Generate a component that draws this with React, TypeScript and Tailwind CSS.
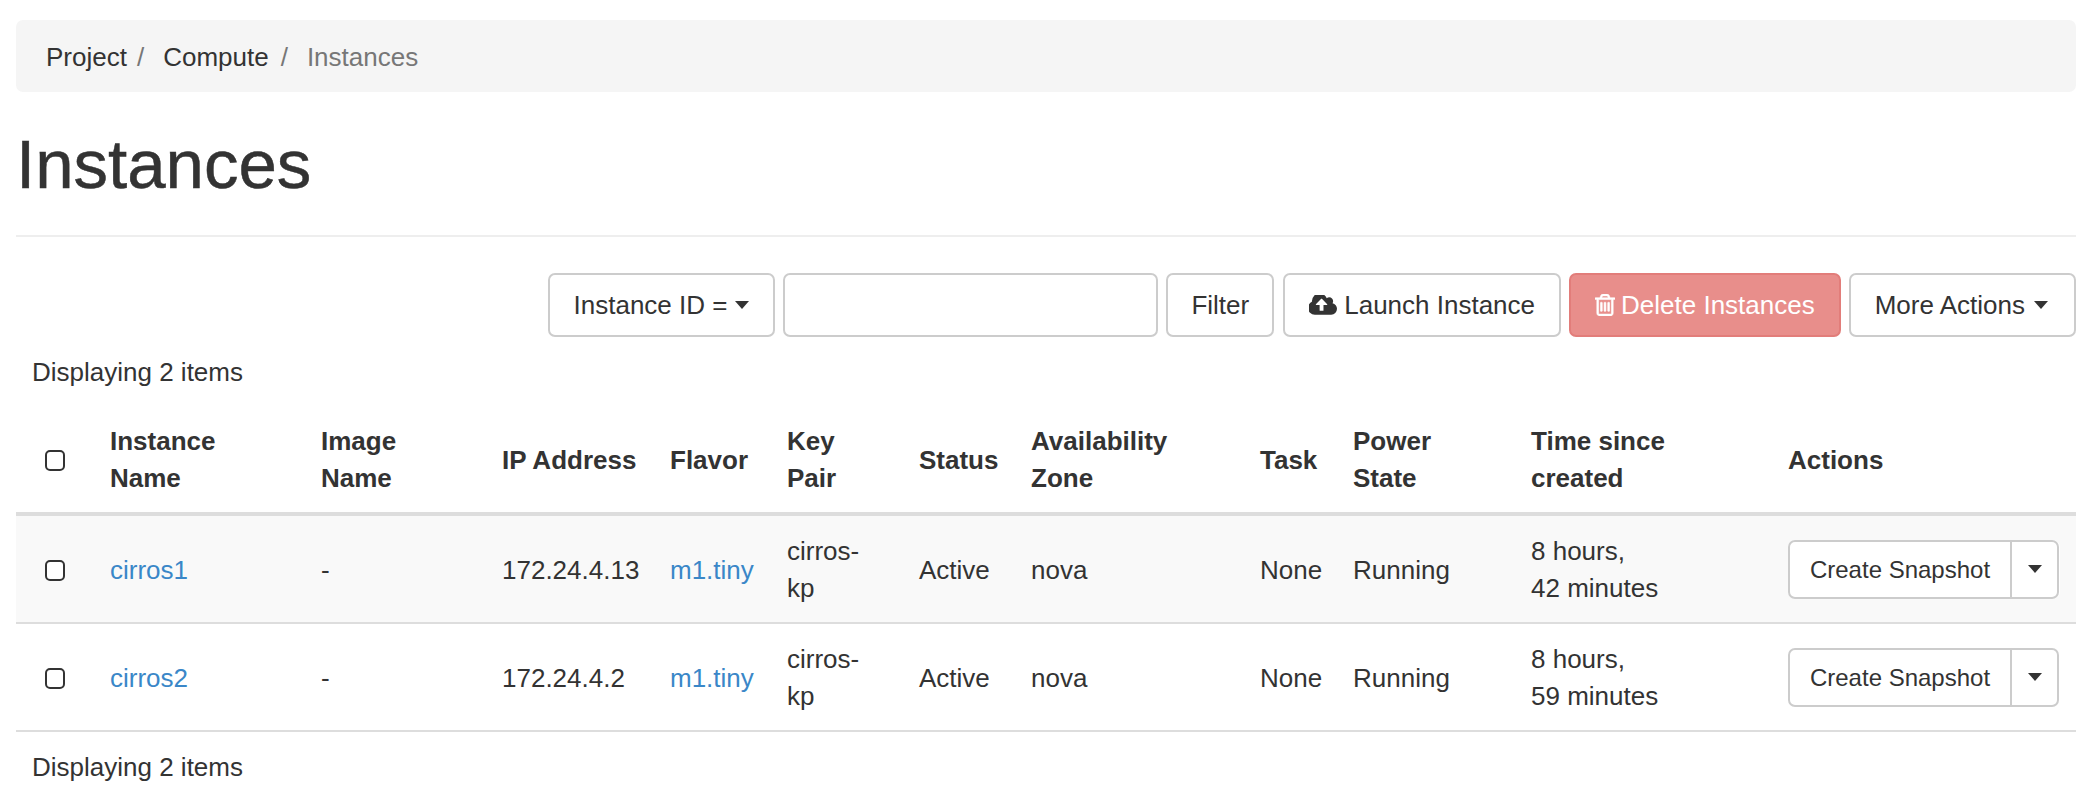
interface Instance {
  name: string;
  ip: string;
  minutes: string;
  striped: boolean;
}

const INSTANCES: Instance[] = [
  { name: 'cirros1', ip: '172.24.4.13', minutes: '42 minutes', striped: true },
  { name: 'cirros2', ip: '172.24.4.2', minutes: '59 minutes', striped: false },
];

function Caret() {
  return <span className="inline-block w-0 h-0 border-x-[7.5px] border-x-transparent border-t-[8px] border-t-[#333]" />;
}

function Checkbox() {
  return <span className="block w-[20px] h-[21px] border-2 border-[#333] rounded-[5px] bg-white" />;
}

function CloudUpload() {
  return (
    <svg viewBox="0 256 1856 1280" className="w-[28px] h-[20px] fill-[#333]">
      <path d="M1216 864q0-14-9-23l-352-352q-9-9-23-9t-23 9l-351 351q-10 12-10 24 0 14 9 23t23 9h224v352q0 13 9.500 22.500t22.500 9.500h192q13 0 22.500-9.500t9.500-22.500v-352h224q13 0 22.500-9.500t9.500-22.500zm640 288q0 159-112.500 271.500t-271.500 112.500h-1088q-185 0-316.500-131.500t-131.500-316.500q0-130 70-240t188-165q-2-30-2-43 0-212 150-362t362-150q156 0 285.500 87t188.500 231q71-62 166-62 106 0 181 75t75 181q0 76-41 138 130 31 213.500 135.500t83.500 238.500z" />
    </svg>
  );
}

function Trash() {
  return (
    <svg viewBox="192 128 1408 1536" className="w-[20px] h-[22px] fill-white stroke-white stroke-[40]">
      <path d="M704 736v576q0 14-9 23t-23 9h-64q-14 0-23-9t-9-23v-576q0-14 9-23t23-9h64q14 0 23 9t9 23zm256 0v576q0 14-9 23t-23 9h-64q-14 0-23-9t-9-23v-576q0-14 9-23t23-9h64q14 0 23 9t9 23zm256 0v576q0 14-9 23t-23 9h-64q-14 0-23-9t-9-23v-576q0-14 9-23t23-9h64q14 0 23 9t9 23zm128 724v-948h-896v948q0 22 7 40.500t14.500 27 10.500 8.500h832q3 0 10.500-8.500t14.500-27 7-40.500zm-672-1076h448l-48-117q-7-9-17-11h-317q-10 2-17 11zm928 32v64q0 14-9 23t-23 9h-96v948q0 83-47 143.500t-113 60.500h-832q-66 0-113-58.500t-47-141.500v-952h-96q-14 0-23-9t-9-23v-64q0-14 9-23t23-9h309l70-167q15-37 54-63t79-26h320q40 0 79 26t54 63l70 167h309q14 0 23 9t9 23z" />
    </svg>
  );
}

const toolbarBtn = 'h-[64px] px-6 flex items-center border-2 border-[#ccc] rounded-[7px] bg-white text-[#333]';
const th = 'pl-4 pr-4 pt-[17px] pb-[15px] text-left align-middle font-bold border-b-4 border-[#ddd]';
const td = 'pl-4 pr-4 pt-[17px] pb-[15px] align-middle border-b-2 border-[#ddd]';

export default function App() {
  return (
    <div className="pl-4 pr-3 pt-5 bg-white text-[#333] text-[26px] leading-[37px] font-['Liberation_Sans',Arial,sans-serif]">
      {/* Breadcrumb */}
      <div className="h-[72px] pl-[30px] pr-[31px] pt-[2px] flex items-center bg-[#f5f5f5] rounded-[7px]">
        <span>Project</span>
        <span className="pl-[10px] pr-[19px] text-[#777]">/</span>
        <span>Compute</span>
        <span className="pl-[12px] pr-[19px] text-[#777]">/</span>
        <span className="text-[#777]">Instances</span>
      </div>

      {/* Page title */}
      <div className="mt-9 pb-[33px] border-b-2 border-[#eee]">
        <h1 className="text-[69px] leading-[74px] font-normal [-webkit-text-stroke:0.5px_#333]">Instances</h1>
      </div>

      {/* Toolbar */}
      <div className="mt-9 flex justify-end gap-[8px]">
        <button className={`${toolbarBtn} gap-[8px]`}>
          Instance ID = <Caret />
        </button>
        <input className="w-[375px] h-[64px] border-2 border-[#ccc] rounded-[7px] bg-white" />
        <button className="h-[64px] px-[23px] flex items-center border-2 border-[#ccc] rounded-[7px] bg-white text-[#333]">Filter</button>
        <button className={`${toolbarBtn} gap-[7px] ml-px`}>
          <CloudUpload />
          Launch Instance
        </button>
        <button className="h-[64px] px-6 flex items-center gap-[6px] border-2 border-[#e27d7a] rounded-[7px] bg-[#e88e8b] text-white">
          <Trash />
          Delete Instances
        </button>
        <button className="h-[64px] pl-6 pr-[26px] flex items-center gap-[9px] border-2 border-[#ccc] rounded-[7px] bg-white text-[#333]">
          More Actions <Caret />
        </button>
      </div>

      {/* Table */}
      <table className="w-full table-fixed border-separate border-spacing-0">
        <caption className="px-4 pt-[17px] pb-[15px] text-left">Displaying 2 items</caption>
        <colgroup>
          <col className="w-[78px]" />
          <col className="w-[211px]" />
          <col className="w-[181px]" />
          <col className="w-[168px]" />
          <col className="w-[117px]" />
          <col className="w-[132px]" />
          <col className="w-[112px]" />
          <col className="w-[229px]" />
          <col className="w-[93px]" />
          <col className="w-[178px]" />
          <col className="w-[257px]" />
          <col className="w-[304px]" />
        </colgroup>
        <thead>
          <tr>
            <th className="pl-[29px] pt-[17px] pb-[15px] align-middle border-b-4 border-[#ddd]"><Checkbox /></th>
            <th className={th}>Instance<br />Name</th>
            <th className={th}>Image<br />Name</th>
            <th className={`${th} whitespace-nowrap`}>IP Address</th>
            <th className={th}>Flavor</th>
            <th className={th}>Key<br />Pair</th>
            <th className={th}>Status</th>
            <th className={th}>Availability<br />Zone</th>
            <th className={th}>Task</th>
            <th className={th}>Power<br />State</th>
            <th className={th}>Time since<br />created</th>
            <th className={th}>Actions</th>
          </tr>
        </thead>
        <tbody>
          {INSTANCES.map((inst) => (
            <tr key={inst.name} className={inst.striped ? 'bg-[#f9f9f9]' : 'bg-white'}>
              <td className="pl-[29px] pt-[17px] pb-[15px] align-middle border-b-2 border-[#ddd]"><Checkbox /></td>
              <td className={td}><a className="text-[#3a87c8]">{inst.name}</a></td>
              <td className={td}>-</td>
              <td className={`${td} whitespace-nowrap`}>{inst.ip}</td>
              <td className={td}><a className="text-[#3a87c8]">m1.tiny</a></td>
              <td className={td}>cirros-<br />kp</td>
              <td className={td}>Active</td>
              <td className={td}>nova</td>
              <td className={td}>None</td>
              <td className={td}>Running</td>
              <td className={td}>8 hours,<br />{inst.minutes}</td>
              <td className="px-4 py-4 align-middle border-b-2 border-[#ddd]">
                <div className="flex h-[59px] text-[24px] bg-white rounded-[7px]">
                  <button className="w-[224px] border-2 border-[#ccc] rounded-l-[7px]">Create Snapshot</button>
                  <button className="w-[47px] flex items-center justify-center border-2 border-l-0 border-[#ccc] rounded-r-[7px]">
                    <Caret />
                  </button>
                </div>
              </td>
            </tr>
          ))}
        </tbody>
        <tfoot>
          <tr>
            <td colSpan={12} className="px-4 pt-[17px] pb-[15px]">Displaying 2 items</td>
          </tr>
        </tfoot>
      </table>
    </div>
  );
}
